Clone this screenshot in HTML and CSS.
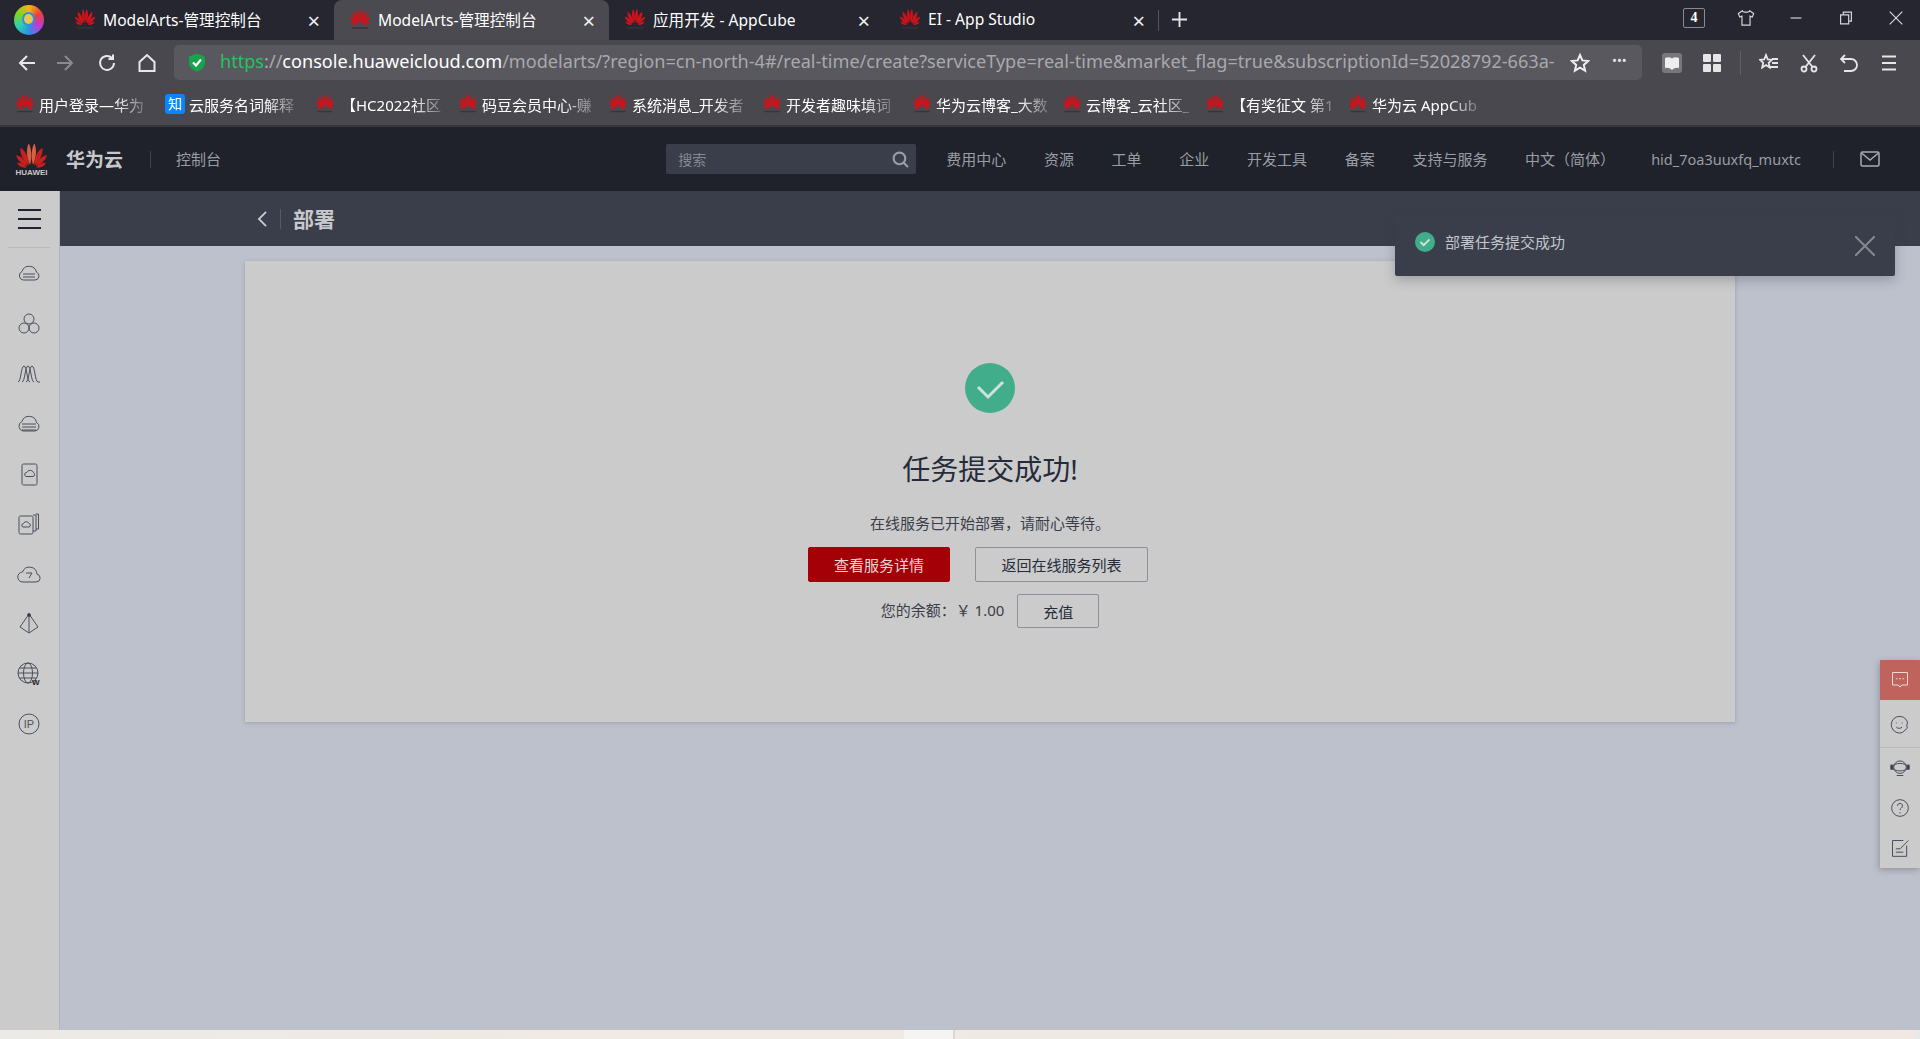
FILE: index.html
```html
<!DOCTYPE html>
<html lang="zh-CN">
<head>
    <meta charset="UTF-8">
    <title>ModelArts-管理控制台</title>
    <link rel="stylesheet" href="styles.css">
</head>
<body>
    <svg class="defs" width="0" height="0">
        <symbol id="hw" viewBox="0 0 24 24">
            <g fill="#d0121b">
                <path d="M11 17C8.500 12 8 6 9.800 1.500 12 4 12.500 12 11 17Z"/>
                <path d="M13 17C15.500 12 16 6 14.200 1.500 12 4 11.500 12 13 17Z"/>
                <path d="M10 17.500C6 14 3.500 9 4 4.500 7.500 6.500 10.500 12.500 10 17.500Z"/>
                <path d="M14 17.500C18 14 20.500 9 20 4.500 16.500 6.500 13.500 12.500 14 17.500Z"/>
                <path d="M9 18C5 16.500 1.500 13.500 .8 10 4.500 10.500 8 14 9 18Z"/>
                <path d="M15 18C19 16.500 22.500 13.500 23.200 10 19.500 10.500 16 14 15 18Z"/>
                <path d="M8.500 19C5 19.500 2.500 17.800 1.500 15.500 4 15.200 7 16.500 8.500 19Z"/>
                <path d="M15.500 19C19 19.500 21.500 17.800 22.500 15.500 20 15.200 17 16.500 15.500 19Z"/>
            </g>
            <rect x="3" y="21.500" width="18" height="1.500" fill="#3a3236"/>
        </symbol>
        <symbol id="hw-plain" viewBox="0 0 24 19">
            <g fill="#c9201f">
                <path d="M11 17C8.500 12 8 6 9.800 1.500 12 4 12.500 12 11 17Z" fill="#d9603f"/>
                <path d="M13 17C15.500 12 16 6 14.200 1.500 12 4 11.500 12 13 17Z" fill="#d9603f"/>
                <path d="M10 17.500C6 14 3.500 9 4 4.500 7.500 6.500 10.500 12.500 10 17.500Z"/>
                <path d="M14 17.500C18 14 20.500 9 20 4.500 16.500 6.500 13.500 12.500 14 17.500Z"/>
                <path d="M9 18C5 16.500 1.500 13.500 .8 10 4.500 10.500 8 14 9 18Z"/>
                <path d="M15 18C19 16.500 22.500 13.500 23.200 10 19.500 10.500 16 14 15 18Z"/>
                <path d="M8.500 19C5 19.500 2.500 17.800 1.500 15.500 4 15.200 7 16.500 8.500 19Z"/>
                <path d="M15.500 19C19 19.500 21.500 17.800 22.500 15.500 20 15.200 17 16.500 15.500 19Z"/>
            </g>
        </symbol>
    </svg>

    <!-- browser chrome -->
    <div class="tabbar">
        <div class="browser-logo"></div>
        <div class="tab"><svg class="favicon"><use href="#hw"/></svg><span class="tab-title">ModelArts-管理控制台</span><span class="tab-close">×</span></div>
        <div class="tab tab-active"><svg class="favicon"><use href="#hw"/></svg><span class="tab-title">ModelArts-管理控制台</span><span class="tab-close">×</span></div>
        <div class="tab"><svg class="favicon"><use href="#hw"/></svg><span class="tab-title">应用开发 - AppCube</span><span class="tab-close">×</span></div>
        <div class="tab tab-last"><svg class="favicon"><use href="#hw"/></svg><span class="tab-title">EI - App Studio</span><span class="tab-close">×</span></div>
        <svg class="tab-new" viewBox="0 0 18 18"><path d="M9 1v16M1 9h16"/></svg>
        <div class="win-controls">
            <span class="tab-count">4</span>
            <svg class="win-icon" viewBox="0 0 20 20"><path d="M6 2 1.500 5 3 9l2.500-1v10h9V8L17 9l1.500-4L14 2c-.5 2-7.500 2-8 0Z"/></svg>
            <svg class="win-icon" viewBox="0 0 20 20"><path d="M4 10h12"/></svg>
            <svg class="win-icon" viewBox="0 0 20 20"><path d="M4 6.500h9v10H4zM7 6.500V3.500h9v10h-3"/></svg>
            <svg class="win-icon" viewBox="0 0 20 20"><path d="m3 3 14 14M17 3 3 17"/></svg>
        </div>
    </div>

    <div class="toolbar">
        <svg class="nav-btn" viewBox="0 0 20 20"><path d="M18 10H3M10 3l-7 7 7 7"/></svg>
        <svg class="nav-btn nav-off" viewBox="0 0 20 20"><path d="M2 10h15M10 3l7 7-7 7"/></svg>
        <svg class="nav-btn" viewBox="0 0 20 20"><path d="M17 10a7 7 0 1 1-2-5M16 1.500V6h-4.500"/></svg>
        <svg class="nav-btn" viewBox="0 0 20 20"><path d="M2.500 9 10 2l7.500 7v9h-15Z"/></svg>
        <div class="address">
            <svg class="shield" viewBox="0 0 20 20"><path d="M10 1 18 4v6c0 5-4 8-8 9-4-1-8-4-8-9V4Z" fill="#16a34a"/><path d="m6 10 3 3 5-6" fill="none" stroke="#fff" stroke-width="2.200"/></svg>
            <span class="url"><span class="url-https">https</span>://<span class="url-host">console.huaweicloud.com</span>/modelarts/?region=cn-north-4#/real-time/create?serviceType=real-time&amp;market_flag=true&amp;subscriptionId=52028792-663a-</span>
            <svg class="addr-star" viewBox="0 0 20 20"><path d="m10 2 2.400 5.400 5.800.6-4.400 3.900 1.300 5.700L10 14.600l-5.100 3 1.300-5.700L1.800 8l5.800-.6Z"/></svg>
            <span class="addr-more">•••</span>
        </div>
        <div class="tools">
            <svg class="tool" viewBox="0 0 20 20"><rect width="20" height="20" rx="3" fill="#77777d" stroke="none"/><path d="M3 5c3-1 5-1 7 .5C12 4 14 4 17 5v10c-3-.5-5 0-7 2-2-2-4-2.500-7-2Z" fill="#eee" stroke="none"/></svg>
            <svg class="tool" viewBox="0 0 20 20"><g fill="#e6e6e6" stroke="none"><rect x="1" y="1" width="8" height="8" rx="1"/><rect x="11" y="1" width="8" height="8" rx="1"/><rect x="1" y="11" width="8" height="8" rx="1"/><rect x="11" y="11" width="8" height="8" rx="1"/></g></svg>
            <span class="tool-sep"></span>
            <svg class="tool" viewBox="0 0 20 20"><path d="m7 2 1.800 4.500 4.200.3-3.300 3 1 4.700L7 12l-3.800 2.500 1-4.700L1 6.800l4.200-.3ZM13 6h6M13 10h6M11 14h8"/></svg>
            <svg class="tool" viewBox="0 0 20 20"><circle cx="5" cy="16" r="2.500"/><circle cx="15" cy="16" r="2.500"/><path d="M6.500 14 16 2M13.500 14 4 2"/></svg>
            <svg class="tool" viewBox="0 0 20 20"><path d="M6 2 2 6l4 4M2 6h10a5.500 5.500 0 0 1 0 12H5"/></svg>
            <svg class="tool" viewBox="0 0 20 20"><path d="M3 3.500h14M3 10h14M3 16.500h14" stroke-width="2.200"/></svg>
        </div>
    </div>

    <div class="bookmarks">
        <div class="bm"><svg class="bm-icon"><use href="#hw"/></svg><span class="bm-text">用户登录—华为</span></div>
        <div class="bm"><span class="bm-zhi">知</span><span class="bm-text">云服务名词解释</span></div>
        <div class="bm bm-short"><svg class="bm-icon"><use href="#hw"/></svg><span class="bm-text bm-text-wide">【HC2022社区</span></div>
        <div class="bm"><svg class="bm-icon"><use href="#hw"/></svg><span class="bm-text">码豆会员中心-赚</span></div>
        <div class="bm bm-wide"><svg class="bm-icon"><use href="#hw"/></svg><span class="bm-text">系统消息_开发者</span></div>
        <div class="bm"><svg class="bm-icon"><use href="#hw"/></svg><span class="bm-text">开发者趣味填词</span></div>
        <div class="bm"><svg class="bm-icon"><use href="#hw"/></svg><span class="bm-text">华为云博客_大数</span></div>
        <div class="bm bm-short"><svg class="bm-icon"><use href="#hw"/></svg><span class="bm-text">云博客_云社区_</span></div>
        <div class="bm bm-short"><svg class="bm-icon"><use href="#hw"/></svg><span class="bm-text bm-text-wide">【有奖征文 第1</span></div>
        <div class="bm"><svg class="bm-icon"><use href="#hw"/></svg><span class="bm-text">华为云 AppCub</span></div>
    </div>

    <!-- console header -->
    <header class="console-head">
        <div class="brand">
            <svg class="brand-mark"><use href="#hw-plain"/></svg>
            <span class="brand-word">HUAWEI</span>
        </div>
        <span class="brand-name">华为云</span>
        <span class="brand-sep"></span>
        <span class="console-link">控制台</span>
        <div class="search">
            <span>搜索</span>
            <svg class="search-icon" viewBox="0 0 16 16"><circle cx="7" cy="7" r="5.500"/><path d="m11 11 4 4"/></svg>
        </div>
        <nav class="top-nav">
            <span>费用中心</span><span>资源</span><span>工单</span><span>企业</span><span>开发工具</span><span>备案</span><span>支持与服务</span><span>中文（简体）</span>
        </nav>
        <span class="user">hid_7oa3uuxfq_muxtc</span>
        <span class="head-sep"></span>
        <svg class="mail" viewBox="0 0 20 16"><rect x="1" y="1" width="18" height="14" rx="1.500"/><path d="m1.500 2 8.500 7 8.500-7"/></svg>
    </header>

    <div class="workspace">
        <aside class="sidebar">
            <div class="menu-btn"><span></span><span></span><span></span></div>
            <div class="side-icons">
                <svg viewBox="0 0 24 24"><path d="M6 18h12a4 4 0 0 0 1.500-7.700A7.500 7.500 0 0 0 5 9.500 4.500 4.500 0 0 0 6 18Z"/><path d="M6 12h12M6 15h12"/></svg>
                <svg viewBox="0 0 24 24"><circle cx="12" cy="7" r="5"/><circle cx="7" cy="16" r="5"/><circle cx="17" cy="16" r="5"/></svg>
                <svg viewBox="0 0 24 24"><path d="M1 20C4 20 4 4 7 4s3 16 6 16M5 20C8 20 8 4 11 4s3 16 6 16M9 20c3 0 3-16 6-16s3 16 6 16h2"/></svg>
                <svg viewBox="0 0 24 24"><path d="M6 19h12a4.500 4.500 0 0 0 1.500-8.500A7.500 7.500 0 0 0 5 9.500 5 5 0 0 0 6 19Z"/><path d="M5 12h14M5 15h14M5 18h14"/></svg>
                <svg viewBox="0 0 24 24"><rect x="5" y="2" width="15" height="21" rx="1.500"/><path d="M9 14.500h7a2 2 0 0 0 .5-3.800 3.500 3.500 0 0 0-6.500-.4A2.200 2.200 0 0 0 9 14.500Z"/></svg>
                <svg viewBox="0 0 24 24"><rect x="2" y="4" width="14" height="18" rx="1.500"/><path d="M16 3h3v16h-3M19 2h2.500v15H19M6 15h6a1.800 1.800 0 0 0 0-3.500 3 3 0 0 0-5.500 0A1.800 1.800 0 0 0 6 15Z"/></svg>
                <svg viewBox="0 0 24 24"><path d="M6 20h13a4 4 0 0 0 1-7.900A7.500 7.500 0 0 0 5.500 10 5 5 0 0 0 6 20Z"/><path d="M9 11h6l-3 5"/></svg>
                <svg viewBox="0 0 24 24"><path d="M12 2 3 15l9 6 9-6ZM12 2v19"/><circle cx="12" cy="3" r="1.500" class="solid"/></svg>
                <svg viewBox="0 0 24 24"><circle cx="11" cy="11" r="10"/><ellipse cx="11" cy="11" rx="4.500" ry="10"/><path d="M1 11h20M2.500 6h17M2.500 16h17"/><text x="15" y="23" class="side-w">W</text></svg>
                <svg viewBox="0 0 24 24"><circle cx="12" cy="12" r="10"/><text x="12" y="16" class="side-ip">IP</text></svg>
            </div>
        </aside>
        <div class="content">
            <div class="page-head">
                <svg class="back" viewBox="0 0 12 20"><path d="M10 2 2 10l8 8"/></svg>
                <span class="page-sep"></span>
                <h1 class="page-title">部署</h1>
            </div>
            <main class="card">
                <div class="ok-circle"><svg viewBox="0 0 50 50"><path d="m13 24 10 10 15-15"/></svg></div>
                <h2 class="card-title">任务提交成功!</h2>
                <p class="card-desc">在线服务已开始部署，请耐心等待。</p>
                <div class="card-actions">
                    <button class="btn btn-red">查看服务详情</button>
                    <button class="btn btn-line">返回在线服务列表</button>
                </div>
                <div class="balance">
                    <span class="balance-text">您的余额：￥ 1.00</span>
                    <button class="btn btn-line btn-small">充值</button>
                </div>
            </main>
        </div>
    </div>

    <div class="taskbar">
        <span class="taskbar-active"></span>
    </div>

    <!-- overlays -->
    <div class="toast">
        <svg class="toast-ok" viewBox="0 0 20 20"><circle cx="10" cy="10" r="10" fill="#41ad8a"/><path d="m5.500 10 3.200 3.200 5.800-5.800" fill="none" stroke="#cfe3dc" stroke-width="2"/></svg>
        <span class="toast-text">部署任务提交成功</span>
        <svg class="toast-close" viewBox="0 0 20 20"><path d="m0 0 20 20M20 0 0 20"/></svg>
    </div>

    <div class="float-bar">
        <div class="float-red"><svg viewBox="0 0 24 24"><path d="M3 3h18v15h-7l-2 2.500L10 18H3Z"/><path d="M7 10.500h2M11 10.500h2M15 10.500h2"/></svg></div>
        <div class="float-item float-sep"><svg viewBox="0 0 24 24"><path d="M21 8.500A10 10 0 1 0 15 21l6-5.500c-1-.5-1-4 0-7Z"/><path d="M7 9.500h1M14 9.500h1M7.500 14.500c2 2 5 2 7 0"/></svg></div>
        <div class="float-item"><svg viewBox="0 0 24 24"><circle cx="12" cy="11" r="7.500"/><path d="M2 11c3-6 17-6 20 0-3 6-17 6-20 0ZM8 21h8"/><rect x="1" y="8.500" width="2.500" height="5" class="solid"/><rect x="20.500" y="8.500" width="2.500" height="5" class="solid"/></svg></div>
        <div class="float-item"><svg viewBox="0 0 24 24"><circle cx="12" cy="12" r="10"/><path d="M9 9.500c0-4 6-4 6 0 0 2.500-3 2.500-3 5M12 17v1.500"/></svg></div>
        <div class="float-item"><svg viewBox="0 0 24 24"><path d="M16 3H3v19h17V9"/><path d="m12 13 10-10M7 13h5M7 17h9"/></svg></div>
    </div>
</body>
</html>
```

FILE: styles.css
```css
* {
    box-sizing: border-box;
}
html, body {
    margin: 0;
    height: 1039px;
    overflow: hidden;
}
body {
    position: relative;
    display: flex;
    flex-direction: column;
    font-family: "Noto Sans", "Noto Sans CJK SC", sans-serif;
    background: #bcc1cc;
}
.defs {
    position: absolute;
}

/* tab strip */
.tabbar {
    height: 40px;
    flex: none;
    display: flex;
    align-items: stretch;
    background: #25262f;
    color: #fff;
}
.browser-logo {
    width: 30px;
    height: 30px;
    margin: 5px 15px 0 14px;
    border-radius: 50%;
    background: conic-gradient(#f9b115, #ea3f3f, #c23bd4, #2f8fe8, #2fd0b0, #7ed321, #f9b115);
    position: relative;
}
.browser-logo::after {
    content: "";
    position: absolute;
    left: 10px;
    top: 9px;
    width: 9px;
    height: 10px;
    border-radius: 50%;
    background: #e9c84a;
    box-shadow: 0 0 0 2px #2f8fe8;
}
.tab {
    width: 275px;
    display: flex;
    align-items: center;
    padding: 0 14px 0 15px;
    font-size: 15.600px;
    position: relative;
}
.tab-active {
    background: #4a4a50;
    border-radius: 8px 8px 0 0;
}
.tab-last::after {
    content: "";
    position: absolute;
    right: 0;
    top: 10px;
    height: 21px;
    width: 1px;
    background: #55565c;
}
.favicon {
    width: 22px;
    height: 23px;
    margin-right: 7px;
    margin-top: -4px;
    flex: none;
}
.tab-title {
    flex: 1;
    white-space: nowrap;
    margin-top: -2px;
}
.tab-close {
    font-size: 22px;
    line-height: 1;
    color: #eee;
}
.tab-new {
    width: 17px;
    height: 17px;
    margin: 11px 0 0 12px;
    fill: none;
    stroke: #e4e4e4;
    stroke-width: 2;
}
.win-controls {
    margin-left: auto;
    display: flex;
    align-items: center;
    gap: 32px;
    padding: 0 15px 0 0;
    margin-top: -4px;
}
.tab-count {
    width: 22px;
    height: 20px;
    border: 1px solid #8a8a90;
    border-radius: 2px;
    font: 700 14px/18px "Liberation Serif", serif;
    text-align: center;
}
.win-icon {
    width: 18px;
    height: 18px;
    fill: none;
    stroke: #d8d8d8;
    stroke-width: 1.300;
}

/* address bar */
.toolbar {
    height: 45px;
    flex: none;
    display: flex;
    align-items: center;
    background: #48484e;
    padding: 0 0 0 17px;
}
.nav-btn {
    width: 20px;
    height: 20px;
    margin-right: 20px;
    fill: none;
    stroke: #e8e8e8;
    stroke-width: 2;
    flex: none;
}
.nav-off {
    stroke: #8a8a8f;
    margin: 0 22px 0 -2px;
}
.address {
    width: 1468px;
    height: 35px;
    margin-left: -3px;
    display: flex;
    align-items: center;
    background: #58585e;
    border-radius: 5px;
    padding: 0 13px 0 13px;
}
.shield {
    width: 20px;
    height: 23px;
    flex: none;
}
.url {
    margin: -4px 0 0 13px;
    width: 1339px;
    flex: none;
    white-space: nowrap;
    font-size: 18.100px;
    color: #a9a9ad;
}
.url-https {
    color: #22c55e;
}
.url-host {
    color: #fff;
}
.addr-star {
    width: 20px;
    height: 20px;
    margin-left: 11px;
    flex: none;
    fill: none;
    stroke: #eee;
    stroke-width: 2;
}
.addr-more {
    margin: -6px 0 0 22px;
    font-size: 13px;
    color: #e8e8e8;
}
.tools {
    display: flex;
    align-items: center;
    margin-left: 20px;
    gap: 20px;
}
.tool {
    width: 20px;
    height: 20px;
    fill: none;
    stroke: #e6e6e6;
    stroke-width: 1.800;
    flex: none;
}
.tool-sep {
    width: 1px;
    height: 24px;
    background: #5f5f65;
    margin: 0 -2px;
}

/* bookmarks */
.bookmarks {
    height: 42px;
    flex: none;
    display: flex;
    align-items: center;
    background: #48484e;
    padding: 0 0 2px 15px;
    border-bottom: 2px solid #36363b;
    color: #fff;
    font-size: 15px;
}
.bm {
    width: 150px;
    flex: none;
    display: flex;
    align-items: center;
    gap: 4px;
}
.bm-short {
    width: 143px;
}
.bm-wide {
    width: 154px;
}
.bm-icon {
    width: 20px;
    height: 22px;
    flex: none;
    margin-top: -3px;
}
.bm-zhi {
    width: 20px;
    height: 20px;
    flex: none;
    background: #0a84ff;
    border-radius: 3px;
    font-size: 14px;
    line-height: 20px;
    text-align: center;
}
.bm-text {
    white-space: nowrap;
    -webkit-mask-image: linear-gradient(to right, #000 72%, rgba(0, 0, 0, 0.25));
    mask-image: linear-gradient(to right, #000 72%, rgba(0, 0, 0, 0.25));
}
.bm-text-wide {
    margin-left: 2px;
}

/* console header */
.console-head {
    height: 64px;
    flex: none;
    display: flex;
    align-items: center;
    background: #1f222a;
    padding: 0 40px 0 15px;
    color: #9a9da3;
    font-size: 15px;
}
.brand {
    width: 33px;
    display: flex;
    flex-direction: column;
    align-items: center;
}
.brand-mark {
    width: 33px;
    height: 27px;
}
.brand-word {
    font: 700 8px/10px "Liberation Sans", sans-serif;
    color: #c8c8c8;
}
.brand-name {
    margin-left: 18px;
    font-size: 19px;
    font-weight: 700;
    color: #c8c8cc;
}
.brand-sep {
    width: 1px;
    height: 17px;
    margin: 0 25px 0 27px;
    background: #41444c;
}
.console-link {
    margin-bottom: 2px;
}
.search {
    width: 250px;
    height: 30px;
    margin-left: auto;
    margin-right: 30px;
    padding: 0 7px 0 12px;
    display: flex;
    align-items: center;
    justify-content: space-between;
    background: #3a3e4a;
    border-radius: 2px;
    font-size: 14px;
    color: #85888f;
}
.search-icon {
    width: 17px;
    height: 17px;
    fill: none;
    stroke: #9a9da3;
    stroke-width: 2;
}
.top-nav {
    display: flex;
    gap: 37.700px;
    margin-bottom: 2px;
}
.user {
    margin-left: 36px;
    font-size: 14.500px;
}
.head-sep {
    width: 1px;
    height: 17px;
    margin: 0 26px 0 32px;
    background: #41444c;
}
.mail {
    width: 20px;
    height: 16px;
    fill: none;
    stroke: #a8aab0;
    stroke-width: 1.500;
}

/* page body */
.workspace {
    flex: 1;
    display: flex;
    min-height: 0;
}
.sidebar {
    width: 60px;
    flex: none;
    background: #cbcbcb;
    border-right: 1px solid #b3b5ba;
}
.menu-btn {
    height: 57px;
    margin: 0 9px 0 8px;
    display: flex;
    flex-direction: column;
    justify-content: center;
    align-items: center;
    gap: 7px;
    border-bottom: 1px solid #b9b9b9;
}
.menu-btn span {
    width: 23px;
    height: 2px;
    background: #1f2430;
}
.side-icons {
    display: flex;
    flex-direction: column;
    align-items: center;
    gap: 26px;
    padding: 14px 2px 0 0;
}
.side-icons svg {
    width: 24px;
    height: 24px;
    fill: none;
    stroke: #4b4f5c;
    stroke-width: 1;
}
.solid {
    fill: #333;
}
.side-w {
    font: 700 8px "Liberation Sans", sans-serif;
    fill: #222;
    stroke: none;
}
.side-ip {
    font: 11px "Liberation Sans", sans-serif;
    fill: #555;
    stroke: none;
    text-anchor: middle;
}
.content {
    flex: 1;
    min-width: 0;
}
.page-head {
    height: 55px;
    display: flex;
    align-items: center;
    padding-left: 197px;
    background: #3a3e4a;
    color: #c9c9cd;
}
.back {
    width: 11px;
    height: 18px;
    fill: none;
    stroke: #c9c9cd;
    stroke-width: 2;
}
.page-sep {
    width: 1px;
    height: 20px;
    margin: 0 12px;
    background: #565a66;
}
.page-title {
    margin: 0 0 2px;
    font-size: 21px;
    font-weight: 700;
}
.card {
    width: 1490px;
    height: 461px;
    margin: 15px 0 0 185px;
    padding-top: 102px;
    display: flex;
    flex-direction: column;
    align-items: center;
    background: #cbcbcb;
    box-shadow: 0 1px 4px rgba(60, 65, 80, 0.25);
    color: #252b3a;
}
.ok-circle {
    width: 50px;
    height: 50px;
    border-radius: 50%;
    background: #41ad8a;
}
.ok-circle svg {
    display: block;
    fill: none;
    stroke: #cfe3dc;
    stroke-width: 3;
}
.card-title {
    margin: 36px 0 0;
    font-size: 28px;
    line-height: 40px;
    font-weight: 400;
}
.card-desc {
    margin: 24px 0 0;
    font-size: 15px;
    line-height: 20px;
    color: #3a3e4a;
}
.card-actions {
    display: flex;
    gap: 25px;
    margin: 14px 24px 0 0;
}
.btn {
    height: 35px;
    padding: 0;
    border: 1px solid #8e8f9b;
    border-radius: 2px;
    background: transparent;
    color: #252b3a;
    font: inherit;
    font-size: 15px;
}
.btn-red {
    width: 142px;
    background: #a30008;
    border-color: #a30008;
    color: #e9d3d4;
}
.btn-line {
    width: 173px;
}
.balance {
    display: flex;
    align-items: center;
    gap: 13px;
    margin-top: 12px;
    font-size: 15px;
    color: #3a3e4a;
}
.balance-text {
    margin-bottom: 3px;
}
.btn-small {
    width: 82px;
    height: 34px;
}

/* bottom strip, cut off by the window */
.taskbar {
    height: 9px;
    flex: none;
    display: flex;
    overflow: hidden;
    background: linear-gradient(to right, #eceae6, #f0e9e4 30%, #efe9e3 70%, #f1e7e3);
    position: relative;
    border-right: 6px solid #e9e9e9;
}
.taskbar-active {
    width: 51px;
    margin-left: 904px;
    background: #f6f4f2;
    border-right: 2px solid #d9d6d3;
}

/* overlays */
.toast {
    position: absolute;
    left: 1395px;
    top: 216px;
    width: 500px;
    height: 60px;
    display: flex;
    align-items: center;
    padding: 0 20px;
    background: #3a3e4a;
    border-radius: 0 0 2px 2px;
    box-shadow: 0 4px 12px rgba(50, 55, 70, 0.3);
    color: #c4c6cc;
    font-size: 15px;
}
.toast-ok {
    width: 20px;
    height: 20px;
    margin-bottom: 8px;
    flex: none;
}
.toast-text {
    margin: 0 0 9px 10px;
}
.toast-close {
    width: 20px;
    height: 20px;
    margin-left: auto;
    fill: none;
    stroke: #85888f;
    stroke-width: 2;
}
.float-bar {
    position: absolute;
    right: 0;
    top: 660px;
    width: 40px;
    background: #cbcbcb;
    box-shadow: -1px 2px 6px rgba(60, 65, 80, 0.35);
}
.float-bar svg {
    width: 20px;
    height: 20px;
    display: block;
    fill: none;
    stroke: #4b4f5c;
    stroke-width: 1.200;
}
.float-red {
    height: 40px;
    display: flex;
    align-items: center;
    justify-content: center;
    background: #c0635c;
}
.float-red svg {
    stroke: #f0d9d6;
}
.float-item {
    height: 40px;
    display: flex;
    align-items: center;
    justify-content: center;
}
.float-sep {
    height: 48px;
    padding-top: 2px;
    border-bottom: 1px solid #b9b9b9;
}
```
